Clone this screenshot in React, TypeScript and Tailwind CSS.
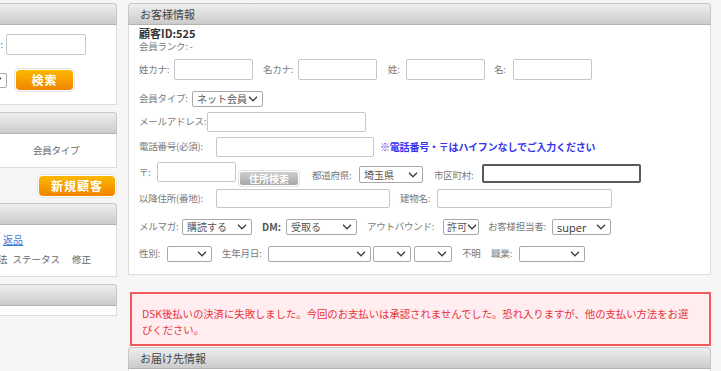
import React from "react";

const Chev = () => (
  <svg width="10" height="6" viewBox="0 0 10 6" className="shrink-0">
    <path d="M1 0.8l4 4 4-4" fill="none" stroke="#3c3c3c" strokeWidth="1.3" />
  </svg>
);

function Sel({ className = "", text = "", latin = false }: { className?: string; text?: string; latin?: boolean }) {
  return (
    <div
      className={`flex items-center justify-between border border-[#a9a9a9] rounded-[2px] bg-white pl-[4px] pr-[4px] shrink-0 whitespace-nowrap overflow-hidden ${className}`}
    >
      <span className={latin ? "text-[11px] leading-none text-[#333] font-['Open_Sans',sans-serif]" : "text-[10px] leading-none text-[#555]"}>{text}</span>
      <Chev />
    </div>
  );
}

function Inp({ className = "" }: { className?: string }) {
  return <div className={`border border-[#c6c6c6] rounded-[2px] bg-white shrink-0 ${className}`} />;
}

function Lbl({ className = "", children }: { className?: string; children: React.ReactNode }) {
  return <div className={`shrink-0 whitespace-nowrap text-[9.5px] tracking-[-0.25px] leading-none text-[#7a7a7a] ${className}`}>{children}</div>;
}

function Header({ title = "" }: { title?: string }) {
  return (
    <div className="shrink-0 h-[22px] rounded-t-[4px] border border-[#c6c6c6] border-b-[#b2b2b2] bg-linear-to-b from-[#efefef] to-[#cbcbcb] flex items-center pl-[11px] text-[11px] leading-none text-[#444]">
      {title}
    </div>
  );
}

function OrangeBtn({ className = "", children }: { className?: string; children: React.ReactNode }) {
  return (
    <div className={`shrink-0 rounded-[5px] border border-[#e4e4e4] p-[1px] bg-white ${className}`}>
      <div className="w-full h-full rounded-[4px] bg-linear-to-b from-[#fbb800] to-[#f08400] flex items-center justify-center text-white font-bold text-[12px] leading-none tracking-[1px]">
        {children}
      </div>
    </div>
  );
}

export default function App() {
  return (
    <div className="w-[721px] h-[371px] overflow-hidden bg-[#f6f6f6] font-['Noto_Sans_CJK_JP','Noto_Sans',sans-serif] pt-[3px] flex items-start">
      {/* left column */}
      <div className="ml-[-20px] w-[137px] shrink-0 flex flex-col">
        <Header />
        <div className="shrink-0 bg-white border border-t-0 border-[#dcdcdc] h-[80px] pt-[9px]">
          <div className="flex justify-end items-center pr-[30px]">
            <Lbl className="mr-[3px] text-[#666]">番号:</Lbl>
            <Inp className="w-[80px] h-[21px]" />
          </div>
          <div className="flex justify-end items-center pr-[41px] mt-[13px]">
            <Sel className="w-[60px] h-[15px]" text="" />
            <OrangeBtn className="ml-[7px] w-[61px] h-[24px]">検索</OrangeBtn>
          </div>
        </div>
        <div className="mt-[7px] shrink-0">
          <Header />
        </div>
        <div className="shrink-0 bg-white border border-t-0 border-[#dcdcdc] h-[34px] flex items-center pl-[52px]">
          <Lbl className="text-[#666]">会員タイプ</Lbl>
        </div>
        <div className="shrink-0 flex justify-end mt-[6px]">
          <OrangeBtn className="w-[80px] h-[24px]">新規顧客</OrangeBtn>
        </div>
        <div className="mt-[5px] shrink-0">
          <Header />
        </div>
        <div className="shrink-0 bg-white border border-t-0 border-[#dcdcdc] h-[52px] pt-[10px]">
          <div className="pl-[22px] text-[10px] leading-none text-[#3a7bd5] underline">返品</div>
          <div className="flex items-center mt-[10px] pl-[17px] text-[9.5px] leading-none text-[#666] whitespace-nowrap">
            <span>法</span>
            <span className="ml-[5px]">ステータス</span>
            <span className="ml-[12px]">修正</span>
          </div>
        </div>
        <div className="mt-[7px] shrink-0">
          <Header />
        </div>
        <div className="shrink-0 bg-white border border-t-0 border-[#dcdcdc] h-[10px]" />
      </div>

      {/* main column */}
      <div className="ml-[11px] w-[583px] shrink-0 flex flex-col">
        <Header title="お客様情報" />
        <div className="shrink-0 bg-white border border-t-0 border-[#dcdcdc] h-[250px] pl-[10px] flex flex-col">
          <div className="shrink-0 mt-[2px] h-[12px] flex items-center text-[11px] font-bold text-[#333] leading-none">顧客ID:525</div>
          <Lbl className="mt-[1px] h-[13px] flex items-center">会員ランク: -</Lbl>

          <div className="shrink-0 mt-[6px] h-[21px] flex items-center">
            <Lbl className="w-[35px]">姓カナ:</Lbl>
            <Inp className="w-[79px] h-[21px]" />
            <Lbl className="ml-[10px] w-[35px]">名カナ:</Lbl>
            <Inp className="w-[79px] h-[21px]" />
            <Lbl className="ml-[11px] w-[18px]">姓:</Lbl>
            <Inp className="w-[79px] h-[21px]" />
            <Lbl className="ml-[9px] w-[19px]">名:</Lbl>
            <Inp className="w-[79px] h-[21px]" />
          </div>

          <div className="shrink-0 mt-[11px] h-[16px] flex items-center">
            <Lbl className="w-[53px]">会員タイプ:</Lbl>
            <Sel className="w-[71px] h-[16px]" text="ネット会員" />
          </div>

          <div className="shrink-0 mt-[5px] h-[20px] flex items-center">
            <Lbl className="w-[68px]">メールアドレス:</Lbl>
            <Inp className="w-[159px] h-[20px]" />
          </div>

          <div className="shrink-0 mt-[5px] h-[20px] flex items-center">
            <Lbl className="w-[77px]">電話番号(必須):</Lbl>
            <Inp className="w-[158px] h-[20px]" />
            <div className="ml-[6px] text-[10px] tracking-[-0.2px] leading-none font-bold text-[#3535ee] whitespace-nowrap">※電話番号・〒はハイフンなしでご入力ください</div>
          </div>

          <div className="shrink-0 mt-[5px] h-[25px] flex items-start">
            <Lbl className="w-[18px] mt-[6px]">〒:</Lbl>
            <Inp className="w-[79px] h-[20px]" />
            <div className="shrink-0 ml-[2px] mt-[8px] w-[62px] h-[17px] rounded-[3px] border border-[#e2e2e2] p-[1px] bg-white">
              <div className="w-full h-full rounded-[2px] bg-linear-to-b from-[#cfcfcf] to-[#a6a6a6] flex items-center justify-center text-white font-bold text-[10px] leading-none">住所検索</div>
            </div>
            <Lbl className="ml-[12px] w-[47px] mt-[9px]">都道府県:</Lbl>
            <Sel className="mt-[4px] w-[64px] h-[17px]" text="埼玉県" />
            <Lbl className="ml-[11px] w-[48px] mt-[9px]">市区町村:</Lbl>
            <div className="mt-[2px] w-[159px] h-[19px] border-2 border-[#5a5a5a] rounded-[2px] bg-white shrink-0" />
          </div>

          <div className="shrink-0 mt-[2px] h-[19px] flex items-center">
            <Lbl className="w-[77px]">以降住所(番地):</Lbl>
            <Inp className="w-[174px] h-[19px]" />
            <Lbl className="ml-[10px] w-[37px]">建物名:</Lbl>
            <Inp className="w-[175px] h-[19px]" />
          </div>

          <div className="shrink-0 mt-[11px] h-[16px] flex items-center">
            <Lbl className="w-[43px]">メルマガ:</Lbl>
            <Sel className="w-[70px] h-[16px]" text="購読する" />
            <div className="ml-[10px] w-[24px] shrink-0 text-[10px] font-bold leading-none text-[#555]">DM:</div>
            <Sel className="w-[71px] h-[16px]" text="受取る" />
            <Lbl className="ml-[10px] w-[76px]">アウトバウンド:</Lbl>
            <Sel className="w-[36px] h-[16px] !pl-[3px] !pr-[2px]" text="許可" />
            <Lbl className="ml-[9px] w-[64px]">お客様担当者:</Lbl>
            <Sel className="w-[59px] h-[16px]" text="super" latin />
          </div>

          <div className="shrink-0 mt-[11px] h-[16px] flex items-center">
            <Lbl className="w-[28px]">性別:</Lbl>
            <Sel className="w-[45px] h-[16px]" />
            <Lbl className="ml-[10px] w-[46px]">生年月日:</Lbl>
            <Sel className="w-[103px] h-[16px]" />
            <Sel className="ml-[2px] w-[38px] h-[16px]" />
            <Sel className="ml-[3px] w-[38px] h-[16px]" />
            <Lbl className="ml-[10px] w-[29px]">不明</Lbl>
            <Lbl className="w-[28px]">職業:</Lbl>
            <Sel className="w-[66px] h-[16px]" />
          </div>
        </div>

        <div className="shrink-0 mt-[17px] ml-[2px] w-[581px] h-[54px] border-2 border-[#ef5b5b] bg-[#ffedf0] pt-[12px] pl-[10px] text-[10.4px] tracking-[-0.05px] leading-[16px] text-[#e8333d] whitespace-nowrap">
          DSK後払いの決済に失敗しました。今回のお支払いは承認されませんでした。恐れ入りますが、他の支払い方法をお選
          <br />
          びください。
        </div>

        <div className="mt-[1px] shrink-0">
          <Header title="お届け先情報" />
        </div>
        <div className="shrink-0 bg-white border border-t-0 border-[#dcdcdc] h-[30px]" />
      </div>
    </div>
  );
}
